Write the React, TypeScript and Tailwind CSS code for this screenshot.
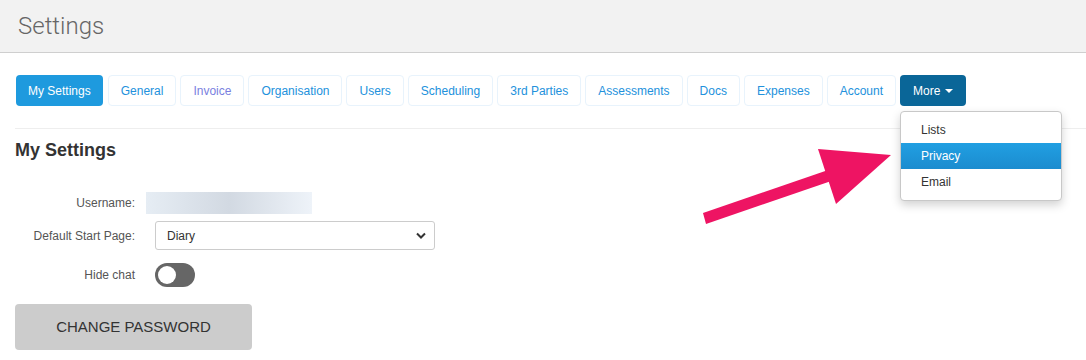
import React from "react";

const tabs = [
  "General",
  "Invoice",
  "Organisation",
  "Users",
  "Scheduling",
  "3rd Parties",
  "Assessments",
  "Docs",
  "Expenses",
  "Account",
];

export default function App() {
  return (
    <div className="relative w-[1086px] h-[360px] overflow-hidden bg-white font-['Liberation_Sans',Arial,sans-serif] text-[#333]">
      <div className="h-[53px] bg-[#f2f2f2] border-b border-[#cfcfcf] flex items-center pl-[18px]">
        <span className="font-['Roboto',sans-serif] font-light text-[24px] text-[#666] leading-none">Settings</span>
      </div>

      <div className="pl-[16px]">
        <div className="mt-[22px] flex gap-[4px] items-center text-[12px]">
          <div className="h-[31px] px-[12px] mr-[1px] flex items-center rounded-[4px] bg-[#1e9ade] text-white">My Settings</div>
          {tabs.map((t) => (
            <div
              key={t}
              className={
                "h-[31px] px-[12px] flex items-center rounded-[4px] border border-[#e8f3fc] bg-white " +
                (t === "Invoice" ? "text-[#7a7fe0]" : "text-[#2291dc]")
              }
            >
              {t}
            </div>
          ))}
          <div className="relative h-[31px] px-[13px] flex items-center gap-[5px] rounded-[4px] bg-[#0a6698] text-white">
            More
            <span className="w-0 h-0 border-l-[4px] border-r-[4px] border-t-[4px] border-l-transparent border-r-transparent border-t-white mt-[1px]" />
          </div>
        </div>

        <div className="mt-[22px] border-t border-[#eeeeee] -ml-[1px]" />

        <h2 className="mt-[11px] -ml-[1px] text-[18px] font-bold text-[#333] leading-[20px]">My Settings</h2>

        <div className="mt-[32px] flex items-center h-[22px] text-[12px]">
          <div className="w-[119px] text-right text-[#555]">Username:</div>
          <div className="ml-[11px] w-[166px] h-[22px] bg-gradient-to-r from-[#e6edf4] via-[#d2d9e2] to-[#eef3f9]" />
        </div>

        <div className="mt-[7px] flex items-center h-[29px] text-[12px]">
          <div className="w-[119px] text-right text-[#555]">Default Start Page:</div>
          <div className="ml-[20px] w-[280px] h-[29px] border border-[#ccc] rounded-[3px] flex items-center justify-between pl-[11px] pr-[8px] text-[#333]">
            <span>Diary</span>
            <svg width="10" height="7" viewBox="0 0 10 7">
              <path d="M1 1.5 L5 5.5 L9 1.5" fill="none" stroke="#333" strokeWidth="2" />
            </svg>
          </div>
        </div>

        <div className="mt-[13px] flex items-center h-[24px] text-[12px]">
          <div className="w-[119px] text-right text-[#555]">Hide chat</div>
          <div className="ml-[20px] w-[40px] h-[24px] rounded-full bg-[#666] flex items-center pl-[3px]">
            <div className="w-[18px] h-[18px] rounded-full bg-white" />
          </div>
        </div>

        <div className="mt-[17px] -ml-[1px] w-[237px] h-[46px] rounded-[4px] bg-[#cccccc] flex items-center justify-center text-[15px] text-[#333]">
          CHANGE PASSWORD
        </div>
      </div>

      <div className="absolute left-[900px] top-[111px] w-[162px] py-[5px] bg-white border border-[#c8c8c8] rounded-[4px] shadow-[0_4px_10px_rgba(0,0,0,0.18)] text-[12px] text-[#333]">
        <div className="h-[26px] flex items-center pl-[20px]">Lists</div>
        <div className="h-[26px] flex items-center pl-[20px] text-white bg-gradient-to-b from-[#219fe2] to-[#1b8ccf]">Privacy</div>
        <div className="h-[26px] flex items-center pl-[20px]">Email</div>
      </div>

      <svg className="absolute left-0 top-0 pointer-events-none" width="1086" height="360">
        <polygon points="703,213 706,224 840,178 834,168" fill="#ee1463" />
        <polygon points="818,149 891,155 836,204" fill="#ee1463" />
      </svg>
    </div>
  );
}
